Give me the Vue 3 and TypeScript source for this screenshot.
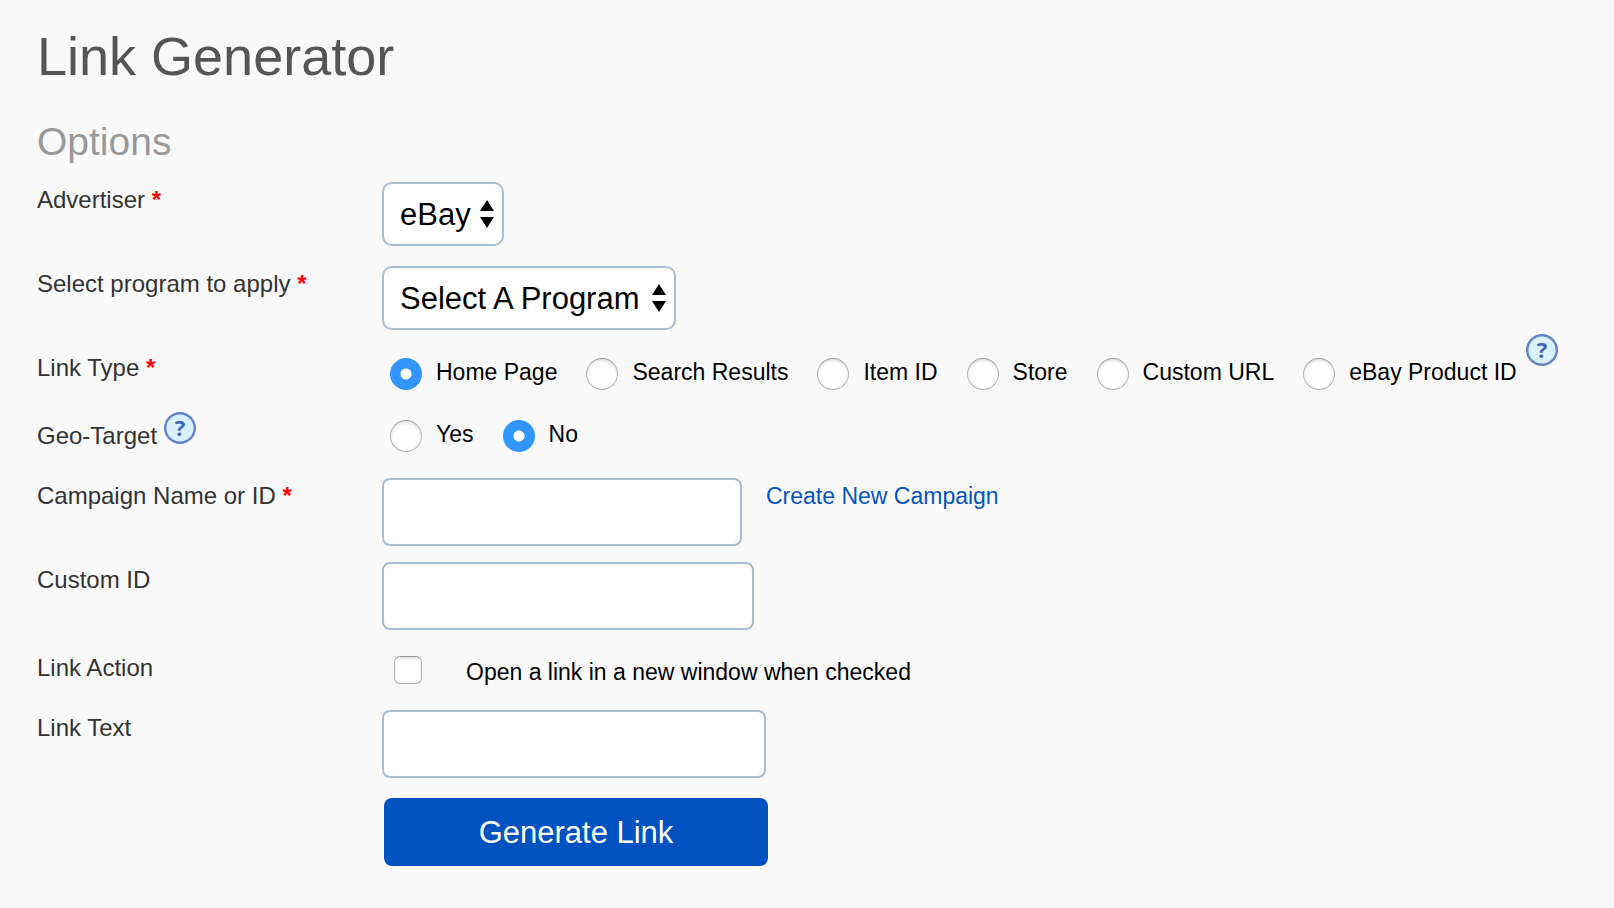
<script setup lang="ts">
import { ref } from 'vue'

interface Choice {
  value: string
  label: string
}

const linkTypes: Choice[] = [
  { value: 'home', label: 'Home Page' },
  { value: 'search', label: 'Search Results' },
  { value: 'item', label: 'Item ID' },
  { value: 'store', label: 'Store' },
  { value: 'url', label: 'Custom URL' },
  { value: 'product', label: 'eBay Product ID' },
]

const geoOptions: Choice[] = [
  { value: 'yes', label: 'Yes' },
  { value: 'no', label: 'No' },
]

const advertiser = ref('ebay')
const program = ref('')
const linkType = ref('home')
const geoTarget = ref('no')
const campaign = ref('')
const customId = ref('')
const newWindow = ref(false)
const linkText = ref('')
</script>

<template>
  <main class="page">
    <h1>Link Generator</h1>
    <h2>Options</h2>

    <form @submit.prevent>
      <div class="row">
        <label class="name" for="advertiser">Advertiser <b class="req">*</b></label>
        <div class="picker">
          <select id="advertiser" v-model="advertiser">
            <option value="ebay">eBay</option>
          </select>
          <svg class="arrows" viewBox="0 0 14 28" aria-hidden="true">
            <path d="M7 0 14 11H0ZM0 17H14L7 28Z" />
          </svg>
        </div>
      </div>

      <div class="row">
        <label class="name" for="program">Select program to apply <b class="req">*</b></label>
        <div class="picker">
          <select id="program" v-model="program">
            <option value="">Select A Program</option>
          </select>
          <svg class="arrows" viewBox="0 0 14 28" aria-hidden="true">
            <path d="M7 0 14 11H0ZM0 17H14L7 28Z" />
          </svg>
        </div>
      </div>

      <div class="row row-types" role="radiogroup" aria-labelledby="type-name">
        <span id="type-name" class="name">Link Type <b class="req">*</b></span>
        <div class="choices">
          <label v-for="t in linkTypes" :key="t.value" class="choice">
            <input v-model="linkType" type="radio" name="link-type" :value="t.value" />
            <span>{{ t.label }}</span>
          </label>
          <button class="help help-raised" type="button">
            <svg viewBox="0 0 32 32" aria-hidden="true">
              <circle cx="16" cy="16" r="14.8" />
              <text x="16" y="24">?</text>
            </svg>
          </button>
        </div>
      </div>

      <div class="row row-geo" role="radiogroup" aria-labelledby="geo-name">
        <div class="name name-help">
          <span id="geo-name">Geo-Target</span>
          <button class="help" type="button">
            <svg viewBox="0 0 32 32" aria-hidden="true">
              <circle cx="16" cy="16" r="14.8" />
              <text x="16" y="24">?</text>
            </svg>
          </button>
        </div>
        <div class="choices">
          <label v-for="g in geoOptions" :key="g.value" class="choice">
            <input v-model="geoTarget" type="radio" name="geo" :value="g.value" />
            <span>{{ g.label }}</span>
          </label>
        </div>
      </div>

      <div class="row">
        <label class="name" for="campaign">Campaign Name or ID <b class="req">*</b></label>
        <div class="with-link">
          <input id="campaign" v-model="campaign" class="box box-s" type="text" />
          <a href="#">Create New Campaign</a>
        </div>
      </div>

      <div class="row">
        <label class="name" for="custom-id">Custom ID</label>
        <input id="custom-id" v-model="customId" class="box box-m" type="text" />
      </div>

      <div class="row row-action">
        <span class="name">Link Action</span>
        <label class="check">
          <input v-model="newWindow" type="checkbox" />
          <span>Open a link in a new window when checked</span>
        </label>
      </div>

      <div class="row">
        <label class="name" for="link-text">Link Text</label>
        <input id="link-text" v-model="linkText" class="box box-l" type="text" />
      </div>

      <div class="row row-submit">
        <button class="submit" type="submit">Generate Link</button>
      </div>
    </form>
  </main>
</template>

<style>
body {
  margin: 0;
  background: #f9f9f9;
}
</style>

<style scoped>
.page {
  padding: 24px 37px 40px;
  color: #000;
  font-family: "Liberation Sans", Arial, sans-serif;
  font-size: 23px;
  line-height: 28px;
}

h1,
h2 {
  margin: 0;
  font-weight: 400;
}

h1 {
  color: #555;
  font-size: 54px;
  line-height: 64px;
}

h2 {
  margin: 30px 0 16px;
  color: #999;
  font-size: 39px;
  line-height: 48px;
}

.row {
  display: grid;
  grid-template-columns: 345px 1fr;
  align-items: start;
  min-height: 84px;
}

.row-types {
  min-height: 62px;
}

.row-geo {
  min-height: 66px;
}

.row-action {
  min-height: 64px;
}

.row-action .name {
  padding-top: 8px;
}

.row-submit {
  padding: 4px 0 0 2px;
}

.name {
  padding-top: 4px;
  color: #333;
  font-size: 24px;
}

.req {
  color: #f00;
}

.name-help {
  display: flex;
  gap: 7px;
  padding-top: 0;
}

.name-help span {
  padding-top: 10px;
}

.picker {
  position: relative;
  justify-self: start;
}

select {
  display: block;
  box-sizing: border-box;
  height: 64px;
  margin: 0;
  padding: 2px 31px 0 16px;
  border: 2px solid #a9bcd1;
  border-radius: 10px;
  background: #fff;
  color: #000;
  font: inherit;
  font-size: 31px;
  line-height: 40px;
  appearance: none;
}

.arrows {
  position: absolute;
  top: 18px;
  right: 10px;
  width: 14px;
  height: 28px;
  fill: #000;
  pointer-events: none;
}

.choices {
  display: flex;
  gap: 29px;
  padding: 8px 0 0 8px;
}

.choice {
  display: flex;
  gap: 14px;
  white-space: nowrap;
}

input[type="radio"] {
  flex: none;
  width: 32px;
  height: 32px;
  margin: 0;
  border: 1px solid #b4b4b4;
  border-top-color: #9a9a9a;
  border-radius: 50%;
  background: #fff;
  box-shadow: inset 0 2px 3px rgba(0, 0, 0, 0.12);
  appearance: none;
}

input[type="radio"]:checked {
  border: 0;
  background: radial-gradient(circle, #fff 5px, #3395ff 6px);
  box-shadow: none;
}

.help {
  flex: none;
  width: 32px;
  height: 32px;
  margin: 0;
  padding: 0;
  border: 0;
  background: none;
}

.help svg {
  display: block;
}

.help circle {
  fill: #d9f0fd;
  stroke: #6482c8;
  stroke-width: 2.4;
}

.help text {
  fill: #4660b4;
  font: 700 22px "Open Sans", sans-serif;
  text-anchor: middle;
}

.help-raised {
  margin: -24px 0 0 -20px;
}

.box {
  box-sizing: border-box;
  height: 68px;
  margin: 0;
  padding: 0 16px;
  border: 2px solid #a9bcd1;
  border-radius: 8px;
  background: #fff;
  font: inherit;
  font-size: 31px;
}

.box-s {
  width: 360px;
}

.box-m {
  width: 372px;
}

.box-l {
  width: 384px;
}

.with-link {
  display: flex;
  gap: 24px;
}

a {
  padding-top: 4px;
  color: #0654ba;
  text-decoration: none;
}

.check {
  display: flex;
  gap: 44px;
  padding: 10px 0 0 12px;
  line-height: 32px;
}

input[type="checkbox"] {
  flex: none;
  width: 28px;
  height: 28px;
  margin: 0;
  border: 1px solid #b4b4b4;
  border-top-color: #9a9a9a;
  border-radius: 6px;
  background: #fff;
  box-shadow: inset 0 2px 3px rgba(0, 0, 0, 0.1);
  appearance: none;
}

input[type="checkbox"]:checked {
  background: #3395ff;
}

.submit {
  grid-column: 2;
  width: 384px;
  height: 68px;
  margin: 0;
  padding: 2px 0 0;
  border: 0;
  border-radius: 8px;
  background: #0052c0;
  color: #fff;
  font: inherit;
  font-size: 31px;
}
</style>
